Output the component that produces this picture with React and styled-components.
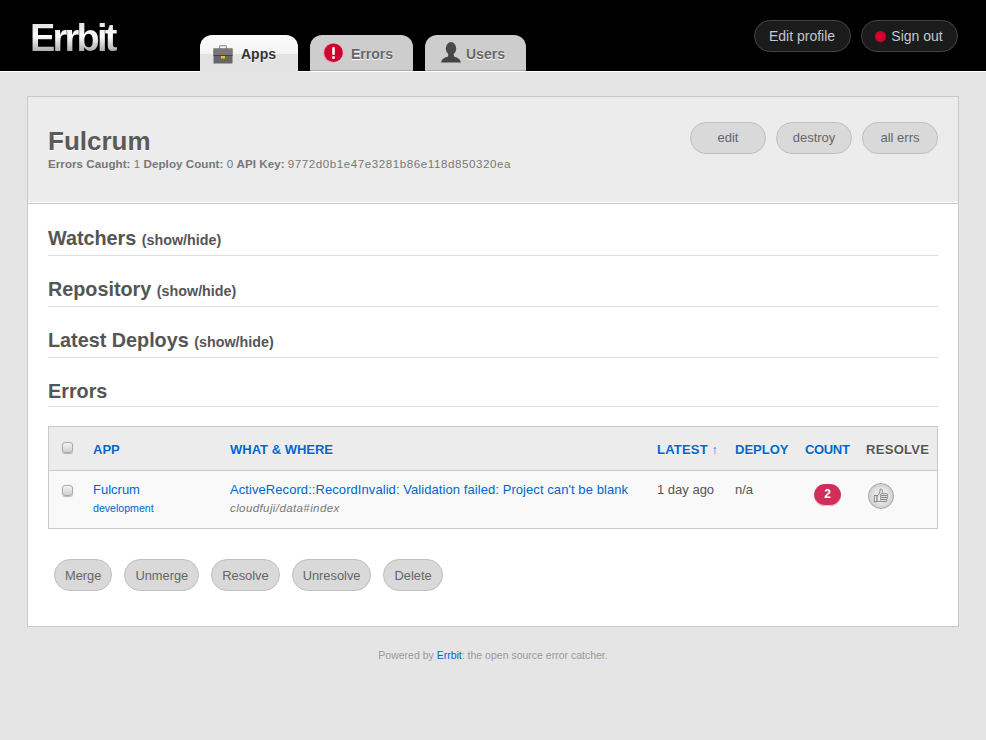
import React from "react";
import styled, { createGlobalStyle } from "styled-components";

const Global = createGlobalStyle`
  html, body { margin: 0; padding: 0; background: #e5e5e5; }
  body { font-family: "Liberation Sans", Arial, sans-serif; font-size: 13px; color: #555; min-height: 740px; }
  a { text-decoration: none; color: #0066cc; }
`;

const TopBar = styled.header`
  display: flex; align-items: flex-start; height: 71px; background: #000;
  border-bottom: 1px solid #fff; padding: 0 28px 0 30px; box-sizing: content-box;
`;
const Logo = styled.div`
  width: 170px; margin-top: 18px; font-size: 38px; line-height: 40px; font-weight: 700; letter-spacing: -2.8px;
  background: linear-gradient(#e8e8e8 20%, #ffffff 45%, #a8a8a8 85%); -webkit-background-clip: text; background-clip: text;
  color: transparent; filter: blur(0.4px);
`;
const Tabs = styled.nav`display: flex; gap: 12px; margin-top: 35px; height: 37px;`;
const Tab = styled.a`
  display: flex; align-items: center; gap: ${p => p.$gap}px; box-sizing: border-box; width: ${p => p.$w}px; height: ${p => (p.$active ? 37 : 36)}px;
  padding: 0 0 0 ${p => p.$pad}px; border-radius: 12px 12px 0 0; font-size: 14px; font-weight: 700;
  color: ${p => (p.$active ? "#333" : "#666")};
  text-shadow: 0 1px 0 #fff;
  background: ${p => (p.$active ? "linear-gradient(#fbfbfb 0, #f4f4f4 19px, #e3e3e3 19px, #e3e3e3 100%)" : "#cdcdcd")};
  border-bottom: ${p => (p.$active ? "none" : "1px solid #aaa")};
  span { position: relative; top: ${p => (p.$active ? 0 : 1)}px; }
`;
const TopActions = styled.div`display: flex; gap: 10px; margin-top: 20px; margin-left: auto;`;
const DarkPill = styled.a`
  display: flex; align-items: center; justify-content: center; gap: 5px; box-sizing: border-box; width: 97px; height: 32px; border-radius: 16px;
  padding-right: 1px; background: #1b1b1b; border: 1px solid #444; color: #c4c8cc; font-size: 14px;
`;
const Dot = styled.i`width: 11px; height: 11px; border-radius: 50%; background: #d0002f; display: block;`;

const Panel = styled.main`
  margin: 24px 27px 0 27px; background: #fff; border: 1px solid #c9c9c9; height: 529px;
  box-sizing: content-box; width: 930px;
`;
const PanelHead = styled.div`
  display: flex; justify-content: space-between; box-sizing: border-box; height: 107px; padding: 25px 20px 0;
  background: #ececec; border-bottom: 1px solid #c9c9c9; box-shadow: inset 0 -1px 0 #fff;
`;
const Title = styled.h1`margin: 4px 0 0; font-size: 26px; line-height: 30px; font-weight: 700; color: #5a5a5a; text-shadow: 0 1px 0 #fff;`;
const Meta = styled.p`
  margin: 1px 0 0; font-size: 11.6px; line-height: 13px; color: #777; letter-spacing: 0.05px; white-space: nowrap;
  b { font-weight: 700; }
`;
const Mono = styled.span`letter-spacing: 0.55px;`;
const PillRow = styled.div`display: flex; gap: ${p => p.$gap}px;`;
const Pill = styled.a`
  display: flex; align-items: center; justify-content: center; box-sizing: border-box; height: 32px; padding: 0 10px;
  ${p => p.$w && `width: ${p.$w}px; padding: 0 0 2px;`}
  border-radius: 16px; background: #d9d9d9; border: 1px solid #c0c0c0; font-size: ${p => (p.$w ? 13 : 12.85)}px; color: #666;
`;

const Body = styled.div`padding: 0 20px;`;
const Section = styled.h3`
  margin: 0; box-sizing: border-box; height: ${p => p.$h}px; font-size: 19.8px; line-height: 24px; font-weight: 700; color: #555;
  border-bottom: 1px solid #ddd;
  small { font-size: 14.3px; font-weight: 700; margin-left: 0; }
`;
const SectionStack = styled.div`display: flex; flex-direction: column; gap: 21px; padding-top: 22px;`;

const Table = styled.table`
  width: 890px; margin-top: 19px; border-collapse: separate; border-spacing: 0; table-layout: fixed; border: 1px solid #c9c9c9;
`;
const HeadCell = styled.th`
  height: 44px; padding: 2px 9px 0; box-sizing: border-box; background: #ececec; border-bottom: 1px solid #c9c9c9;
  text-align: left; font-size: 13px; font-weight: 700; text-transform: uppercase; white-space: nowrap; color: #555; text-shadow: 0 1px 0 #fff;
  letter-spacing: ${p => p.$ls || 0}px;
  a { color: #0066cc; }
`;
const Cell = styled.td`
  height: 57px; padding: 11px 9px 0; box-sizing: border-box; vertical-align: top; background: #f9f9f9; line-height: 16px; font-size: 13px; color: #555; white-space: nowrap;
`;
const CheckCell = styled(Cell)`padding-top: 14px; padding-left: 13px;`;
const Check = styled.i`
  display: block; box-sizing: border-box; width: 11px; height: 11px; border-radius: 3px; border: 1px solid #aaa; background: linear-gradient(#f4f4f4, #cfcfcf);
  box-shadow: 0 1px 1px rgba(0,0,0,.25); margin-left: ${p => p.$l || 0}px; margin-top: ${p => p.$t || 0}px;
`;
const Wide = styled.a`letter-spacing: 0.07px;`;
const Sub = styled.div`margin-top: 3px; font-size: 10.6px; line-height: 14px;`;
const Where = styled.div`margin-top: 2px; font-size: 11.5px; line-height: 16px; font-style: italic; color: #777; letter-spacing: 0.4px;`;
const Count = styled.span`
  display: block; width: 27px; height: 22px; margin: 2px 0 0 9px; border-radius: 11px; background: #d03058; box-shadow: inset 0 -1px 0 #f3c3d0;
  color: #fff; font-size: 12px; font-weight: 700; line-height: 21px; text-align: center; box-sizing: border-box;
`;
const Thumb = styled.span`
  display: flex; align-items: center; justify-content: center; width: 26px; height: 26px; margin: 1px 0 0 2px; border-radius: 50%; box-sizing: border-box;
  background: radial-gradient(circle at 50% 50%, #e8e8e8 40%, #cfcfcf 70%, #a4a4a4 100%); border: 1px solid #a8a8a8;
`;
const Actions = styled(PillRow)`padding: 30px 0 0 6px;`;
const Footer = styled.footer`
  margin-top: 21px; text-align: center; font-size: 10.5px; line-height: 14px; color: #999;
`;

const Briefcase = () => (
  <svg width="20" height="20" viewBox="0 0 20 20">
    <path d="M6.5 5V2.8C6.5 2 7 1.6 8 1.6h4c1 0 1.500.4 1.500 1.200V5" fill="none" stroke="#999" strokeWidth="1.200" />
    <rect x="0.500" y="4.500" width="19" height="15" fill="#666" />
    <rect x="0.500" y="4.500" width="19" height="7" fill="#777" />
    <rect x="0.500" y="11" width="19" height="1" fill="#444" />
    <rect x="8" y="12" width="4" height="2.500" fill="#f2c400" />
  </svg>
);
const Alert = () => (
  <svg width="20" height="20" viewBox="0 0 20 20">
    <circle cx="10" cy="10" r="10" fill="#e8a0b0" />
    <circle cx="10.500" cy="9.700" r="9.300" fill="#d0002f" />
    <rect x="9.200" y="4" width="2.600" height="8" rx="1" fill="#fff" />
    <circle cx="10.500" cy="14.500" r="1.500" fill="#fff" />
  </svg>
);
const Person = () => (
  <svg width="20" height="21" viewBox="0 0 20 21">
    <ellipse cx="10" cy="6.500" rx="5.200" ry="6.500" fill="#4a4a4a" />
    <path d="M7.500 11.500h5l.5 3c3 1 6 2 7 6H0c1-4 4-5 7-6z" fill="#444" />
  </svg>
);
const ThumbsIcon = () => (
  <svg width="16" height="16" viewBox="0 0 18 18" fill="#f4f4f4" stroke="#808080" strokeWidth="1.100">
    <rect x="1.500" y="8.500" width="3" height="7" />
    <path d="M4.500 9C7 8 8 5 8 1.800c0-1.300 2.500-.8 2.500 1.200 0 1.500-.5 2.500-.5 3.500" />
    <path d="M4.500 9v6h4" />
    <rect x="8.500" y="6.500" width="8" height="2.200" rx="1" />
    <rect x="8.500" y="8.700" width="8" height="2.200" rx="1" />
    <rect x="8.500" y="10.900" width="7.500" height="2.200" rx="1" />
    <rect x="8.500" y="13.100" width="7" height="2.200" rx="1" />
  </svg>
);

const columns = [
  { w: 35 }, { w: 137, label: "App" }, { w: 427, label: "What & Where" }, { w: 78, label: "Latest ↑", ls: 0.2 },
  { w: 70, label: "Deploy" }, { w: 61, label: "Count", ls: -0.35 }, { w: 80, label: "Resolve", plain: true, ls: 0.3 },
];

export default function App() {
  return (
    <>
      <Global />
      <TopBar>
        <Logo>Errbit</Logo>
        <Tabs>
          <Tab $active $w={98} $pad={13} $gap={8}><Briefcase /><span>Apps</span></Tab>
          <Tab $w={103} $pad={13} $gap={8}><Alert /><span>Errors</span></Tab>
          <Tab $w={101} $pad={16} $gap={5}><Person /><span>Users</span></Tab>
        </Tabs>
        <TopActions>
          <DarkPill>Edit profile</DarkPill>
          <DarkPill><Dot />Sign out</DarkPill>
        </TopActions>
      </TopBar>
      <Panel>
        <PanelHead>
          <div>
            <Title>Fulcrum</Title>
            <Meta>
              <b>Errors Caught:</b> 1 <b>Deploy Count:</b> 0 <b>API Key:</b> <Mono>9772d0b1e47e3281b86e118d850320ea</Mono>
            </Meta>
          </div>
          <PillRow $gap={10}>
            <Pill $w={76}>edit</Pill>
            <Pill $w={76}>destroy</Pill>
            <Pill $w={76}>all errs</Pill>
          </PillRow>
        </PanelHead>
        <Body>
          <SectionStack>
            <Section $h={30}>Watchers <small>(show/hide)</small></Section>
            <Section $h={30}>Repository <small>(show/hide)</small></Section>
            <Section $h={30}>Latest Deploys <small>(show/hide)</small></Section>
            <Section $h={28}>Errors</Section>
          </SectionStack>
          <Table>
            <colgroup>
              {columns.map((c, i) => <col key={i} style={{ width: c.w }} />)}
            </colgroup>
            <thead>
              <tr>
                {columns.map((c, i) => (
                  <HeadCell key={i} $ls={c.ls}>
                    {i === 0 ? <Check $l={4} $t={-5} /> : c.plain ? c.label : <a>{c.label}</a>}
                  </HeadCell>
                ))}
              </tr>
            </thead>
            <tbody>
              <tr>
                <CheckCell><Check /></CheckCell>
                <Cell><a>Fulcrum</a><Sub><a>development</a></Sub></Cell>
                <Cell><Wide>ActiveRecord::RecordInvalid: Validation failed: Project can't be blank</Wide><Where>cloudfuji/data#index</Where></Cell>
                <Cell>1 day ago</Cell>
                <Cell>n/a</Cell>
                <Cell><Count>2</Count></Cell>
                <Cell><Thumb><ThumbsIcon /></Thumb></Cell>
              </tr>
            </tbody>
          </Table>
          <Actions $gap={12}>
            <Pill>Merge</Pill>
            <Pill>Unmerge</Pill>
            <Pill>Resolve</Pill>
            <Pill>Unresolve</Pill>
            <Pill>Delete</Pill>
          </Actions>
        </Body>
      </Panel>
      <Footer>Powered by <a>Errbit</a>: the open source error catcher.</Footer>
    </>
  );
}
